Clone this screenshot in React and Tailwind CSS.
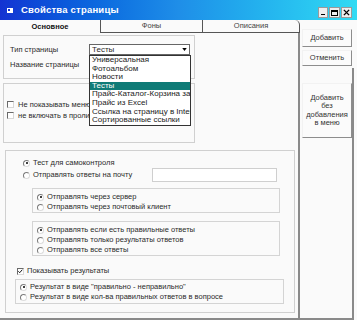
import React from "react";

const F = { fontFamily: '"Liberation Sans", Arial, sans-serif' };

function Radio({ on }) {
  return (
    <span className="relative inline-block w-[7px] h-[7px] shrink-0 rounded-full border border-t-[#7a7a7a] border-l-[#7a7a7a] border-r-[#dcdcdc] border-b-[#dcdcdc] bg-white">
      {on && <span className="absolute left-[1.5px] top-[1.5px] w-[2px] h-[2px] rounded-full bg-black" />}
    </span>
  );
}

function Check({ on }) {
  return (
    <span className="relative inline-block w-[7px] h-[7px] shrink-0 border border-t-[#6a6a6a] border-l-[#6a6a6a] border-r-[#d8d8d8] border-b-[#d8d8d8] bg-white">
      {on && (
        <svg viewBox="0 0 7 7" className="absolute left-0 top-0 w-[5px] h-[5px]">
          <path d="M0.5 3.2 L2.4 5.2 L6 1" stroke="#000" strokeWidth="1.3" fill="none" />
        </svg>
      )}
    </span>
  );
}

function RRow({ on, children, cls = "" }) {
  return (
    <div className={"flex items-center h-[10px] gap-[3px] " + cls}>
      <Radio on={on} />
      <span className="leading-none whitespace-nowrap">{children}</span>
    </div>
  );
}

function Btn({ children, cls = "" }) {
  return (
    <div
      className={
        "flex items-center justify-center text-center bg-[#fbfbfb] border border-t-[#f2f2f2] border-l-[#f2f2f2] border-r-[#8d8d8d] border-b-[#8d8d8d] text-[#333] leading-[8.5px] " +
        cls
      }
    >
      {children}
    </div>
  );
}

export default function App() {
  const items = [
    "Универсальная",
    "Фотоальбом",
    "Новости",
    "Тесты",
    "Прайс-Каталог-Корзина заказов",
    "Прайс из Excel",
    "Ссылка на страницу в Internet",
    "Сортированные ссылки",
  ];
  return (
    <div
      style={F}
      className="relative w-[357px] h-[320px] overflow-hidden bg-[#fafafa] text-[7.5px] text-[#2a2a2a]"
    >
      {/* title bar */}
      <div className="h-[20px] flex items-center bg-gradient-to-r from-[#1433d2] via-[#1f8ee8] to-[#32dbf3] pl-[7px] pr-[5px]">
        <span className="relative w-[6px] h-[5px] bg-white mr-[8px]">
          <span className="absolute left-[1px] top-[1px] w-[2px] h-[2px] bg-[#1433d2]" />
        </span>
        <span className="text-white font-bold text-[9.5px] tracking-[0.2px]">Свойства страницы</span>
        <div className="ml-auto flex items-center gap-[1px] mt-[5px]">
          <div className="w-[10px] h-[11px] bg-[#eeeeee] border border-[#9a9a9a] flex items-end justify-center pb-[2px]">
            <span className="w-[4px] h-[1.5px] bg-black" />
          </div>
          <div className="w-[11px] h-[11px] bg-[#eeeeee] border border-[#9a9a9a] flex items-center justify-center">
            <span className="w-[7px] h-[6px] border border-black border-t-2" />
          </div>
          <div className="w-[11px] h-[11px] bg-[#eeeeee] border border-[#9a9a9a] flex items-center justify-center">
            <svg viewBox="0 0 8 8" className="w-[7px] h-[7px]">
              <path d="M1 1 L7 7 M7 1 L1 7" stroke="#000" strokeWidth="1.6" />
            </svg>
          </div>
        </div>
      </div>

      <div className="flex h-[300px]">
        {/* left: tabs + panel */}
        <div className="w-[300px] flex flex-col">
          <div className="flex h-[13px] text-[7.5px]">
            <div className="w-[100px] flex items-center justify-center font-bold text-[#111]">Основное</div>
            <div className="w-[102px] flex items-center justify-center border-l border-b border-[#555] text-[#444]">Фоны</div>
            <div className="w-[98px] flex items-center justify-center border-l border-b border-r border-[#555] rounded-tr-[5px] text-[#444]">
              Описания
            </div>
          </div>

          <div className="relative flex-1 flex flex-col border-r-2 border-b-2 border-[#8a8a8a] pl-[3px] pt-[2px]">
            {/* Box A */}
            <div className="w-[192px] h-[44px] border border-[#d0d0d0] pl-[6px] pt-[8px] flex flex-col gap-[4px]">
              <div className="flex items-center h-[11px]">
                <span className="w-[79px]">Тип страницы</span>
                <div className="w-[101px] h-[11px] bg-white border border-[#666] flex items-center pl-[2px] text-[8px]">
                  <span>Тесты</span>
                  <svg viewBox="0 0 6 4" className="ml-auto mr-[2px] w-[5px] h-[3px]">
                    <path d="M0 0 L6 0 L3 4 Z" fill="#000" />
                  </svg>
                </div>
              </div>
              <div className="flex items-center h-[11px]">
                <span className="w-[79px]">Название страницы</span>
                <div className="w-[101px] h-[11px] bg-white border border-[#999]" />
              </div>
            </div>

            {/* Box B */}
            <div className="mt-[4px] w-[192px] h-[60px] border border-[#d0d0d0] pl-[3px] pt-[15px] flex flex-col">
              <div className="flex items-center h-[11px] gap-[4px]">
                <Check />
                <span className="whitespace-nowrap">Не показывать меню</span>
              </div>
              <div className="flex items-center h-[11px] gap-[4px]">
                <Check />
                <span className="whitespace-nowrap">не включать в пролист</span>
              </div>
            </div>

            {/* Box C */}
            <div className="mt-[7px] ml-[2px] w-[290px] h-[163px] border border-[#d0d0d0] flex flex-col">
              <RRow on cls="mt-[7px] ml-[17px]">Тест для самоконтроля</RRow>
              <div className="flex items-center h-[14px] pl-[17px] pr-[17px]">
                <Radio />
                <span className="ml-[3px] whitespace-nowrap">Отправлять ответы на почту</span>
                <div className="ml-auto w-[125px] h-[14px] bg-white border border-[#cfcfcf]" />
              </div>

              <div className="mt-[6px] ml-[26px] w-[248px] h-[25px] border border-[#d4d4d4] pl-[4px] pt-[3px]">
                <RRow on>Отправлять через сервер</RRow>
                <RRow>Отправлять через почтовый клиент</RRow>
              </div>

              <div className="mt-[8px] ml-[26px] w-[248px] h-[35px] border border-[#d4d4d4] pl-[4px] pt-[3px]">
                <RRow on>Отправлять если есть правильные ответы</RRow>
                <RRow>Отправлять только результаты ответов</RRow>
                <RRow>Отправлять все ответы</RRow>
              </div>

              <div className="mt-[10px] ml-[11px] flex items-center h-[10px] gap-[3px]">
                <Check on />
                <span className="whitespace-nowrap">Показывать результаты</span>
              </div>

              <div className="mt-[3px] ml-[9px] w-[269px] h-[25px] border border-[#d4d4d4] pl-[4px] pt-[2px]">
                <RRow on>Результат в виде "правильно - неправильно"</RRow>
                <RRow>Результат в виде кол-ва правильных ответов в вопросе</RRow>
              </div>
            </div>

            {/* dropdown list overlay */}
            <div className="absolute left-[89px] top-[22px] w-[102px] h-[71px] bg-white border border-[#333] overflow-hidden text-[8px]">
              {items.map((t) => (
                <div
                  key={t}
                  className={
                    "h-[8.6px] leading-[8.6px] pl-[2px] whitespace-nowrap " +
                    (t === "Тесты" ? "bg-[#0f7b77] text-white" : "text-[#222]")
                  }
                >
                  {t}
                </div>
              ))}
            </div>
          </div>
        </div>

        {/* right column */}
        <div className="flex-1 flex flex-col pt-[9px] pl-[2px] pr-[3px]">
          <Btn cls="w-[50px] h-[18px]">Добавить</Btn>
          <Btn cls="mt-[3px] w-[50px] h-[16px]">Отменить</Btn>
          <div className="mt-[2px] flex-1 border-r-2 border-b-2 border-[#8a8a8a] -ml-[3px] pl-[3px] pt-[15px]">
            <Btn cls="w-[50px] h-[55px]">
              Добавить
              <br />
              без
              <br />
              добавления
              <br />в меню
            </Btn>
          </div>
        </div>
      </div>
    </div>
  );
}
